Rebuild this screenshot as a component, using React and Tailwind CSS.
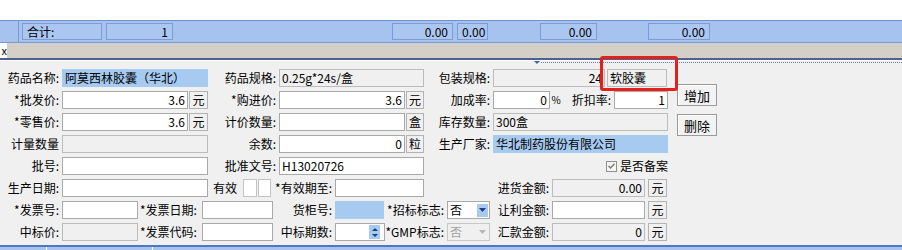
import React from 'react'

function Label({ w, left, children }) {
  return (
    <div className={`${w} shrink-0 whitespace-nowrap ${left ? 'text-left pl-[2px]' : 'text-right pr-[3px]'}`}>{children}</div>
  )
}

function Field({ w, tone = 'white', right, children }) {
  const toneCls =
    tone === 'blue'
      ? 'bg-[#a6caf0] border-[#a6caf0]'
      : tone === 'gray'
      ? 'bg-[#f0f0f0] border-[#bcbcbc]'
      : 'bg-white border-[#a9a9a9]'
  return (
    <div className={`${w} ${toneCls} shrink-0 h-[18px] border flex items-center px-[2px] whitespace-nowrap overflow-hidden ${right ? 'justify-end' : 'justify-start'}`}>
      {children}
    </div>
  )
}

function Unit({ w = 'w-[19px]', ml = 'ml-[1px]', children }) {
  return (
    <div className={`${w} ${ml} shrink-0 h-[18px] border border-[#b3b3b3] bg-[#f0f0f0] flex items-center justify-center`}>{children}</div>
  )
}

function Row({ children }) {
  return <div className="h-[22px] flex items-center">{children}</div>
}

function Select({ disabled }) {
  return (
    <div className={`w-[43px] shrink-0 h-[18px] border flex items-center justify-between pl-[2px] pr-[1px] ${disabled ? 'bg-[#f0f0f0] border-[#c8c8c8] text-[#a0a0a0]' : 'bg-white border-[#a9a9a9]'}`}>
      <span>否</span>
      <div className={`w-[11px] h-[13px] flex items-center justify-center ${disabled ? '' : 'bg-[#a6caf0]'}`}>
        <svg width="7" height="4" viewBox="0 0 7 4"><path d="M0 0h7L3.5 4z" fill={disabled ? '#b5b5b5' : '#1d3f86'} /></svg>
      </div>
    </div>
  )
}

function TopCell({ w, ml, right, children }) {
  return (
    <div className={`${w} ${ml} shrink-0 h-[17px] border border-[#7e9bd6] bg-[#abc7f1] flex items-center px-[4px] ${right ? 'justify-end' : 'justify-start'}`}>
      {children}
    </div>
  )
}

function Btn({ mt, children }) {
  return (
    <div className={`${mt} w-[40px] h-[22px] border border-[#9a9a9a] bg-[#f3f3f3] shadow-[inset_1px_1px_0_#ffffff] flex items-center justify-center text-[13px]`}>{children}</div>
  )
}

export default function App() {
  return (
    <div className="relative w-[902px] h-[250px] overflow-hidden bg-[#f0f0f0] text-[12px] leading-none text-black font-['Noto_Sans_CJK_SC',sans-serif]">
      <div className="h-[20px] bg-white" />
      <div className="h-[23px] bg-[#a6c3ef] border-t border-b border-t-[#6f8fd0] border-b-[#7b98d3] flex items-center">
        <div className="w-[19px] h-full border-r border-[#7b98d3] shrink-0" />
        <TopCell w="w-[80px]" ml="ml-[3px]">合计:</TopCell>
        <TopCell w="w-[67px]" ml="ml-[4px]" right>1</TopCell>
        <TopCell w="w-[61px]" ml="ml-[219px]" right>0.00</TopCell>
        <TopCell w="w-[31px]" ml="ml-[4px]">0.00</TopCell>
        <TopCell w="w-[57px]" ml="ml-[52px]" right>0.00</TopCell>
        <TopCell w="w-[62px]" ml="ml-[51px]" right>0.00</TopCell>
      </div>
      <div className="h-[15px] bg-[#d4d0c8] flex">
        <div className="w-[7px] bg-white overflow-hidden text-[11px] leading-[15px] flex justify-end">x</div>
      </div>
      <div className="h-[2px] bg-[#4d6191]" />
      <div className="h-[7px] flex flex-col">
        <div className="h-[1px] bg-white" />
        <div className="h-[3px] flex items-center">
          <div className="ml-[533px] w-[8px] h-[3px] flex items-start justify-center">
            <svg width="6" height="3" viewBox="0 0 6 3"><path d="M0 0h6L3 3z" fill="#3b64b5" /></svg>
          </div>
          <div className="flex-1 border-t border-dotted border-[#6a7fb0]" />
        </div>
      </div>

      <div className="flex">
        <div className="w-[668px] shrink-0">
          <Row>
            <Label w="w-[62px]">药品名称:</Label>
            <Field w="w-[146px]" tone="blue">阿莫西林胶囊（华北）</Field>
            <Label w="w-[71px]">药品规格:</Label>
            <Field w="w-[145px]" tone="gray">0.25g*24s/盒</Field>
            <Label w="w-[69px]">包装规格:</Label>
            <Field w="w-[112px]" tone="gray" right>24</Field>
            <div className="ml-[2px]"><Field w="w-[60px]" tone="gray">软胶囊</Field></div>
          </Row>
          <Row>
            <Label w="w-[62px]">*批发价:</Label>
            <Field w="w-[126px]" right>3.6</Field>
            <Unit>元</Unit>
            <Label w="w-[71px]">*购进价:</Label>
            <Field w="w-[126px]" right>3.6</Field>
            <Unit w="w-[18px]">元</Unit>
            <Label w="w-[69px]">加成率:</Label>
            <Field w="w-[57px]" right>0</Field>
            <div className="w-[12px] text-center shrink-0 text-[10px]">%</div>
            <Label w="w-[52px]">折扣率:</Label>
            <Field w="w-[54px]" right>1</Field>
          </Row>
          <Row>
            <Label w="w-[62px]">*零售价:</Label>
            <Field w="w-[126px]" right>3.6</Field>
            <Unit>元</Unit>
            <Label w="w-[71px]">计价数量:</Label>
            <Field w="w-[126px]" />
            <Unit w="w-[18px]">盒</Unit>
            <Label w="w-[69px]">库存数量:</Label>
            <Field w="w-[175px]" tone="gray">300盒</Field>
          </Row>
          <Row>
            <Label w="w-[62px]">计量数量</Label>
            <Field w="w-[146px]" tone="gray" />
            <Label w="w-[71px]">余数:</Label>
            <Field w="w-[126px]" right>0</Field>
            <Unit w="w-[18px]">粒</Unit>
            <Label w="w-[69px]">生产厂家:</Label>
            <Field w="w-[175px]" tone="blue">华北制药股份有限公司</Field>
          </Row>
          <Row>
            <Label w="w-[62px]">批号:</Label>
            <Field w="w-[146px]" />
            <Label w="w-[71px]">批准文号:</Label>
            <Field w="w-[145px]">H13020726</Field>
            <div className="w-[182px] shrink-0" />
            <div className="w-[11px] h-[11px] border border-[#8f8f8f] bg-[#f4f4f4] flex items-center justify-center shrink-0">
              <svg width="7" height="6" viewBox="0 0 7 6"><path d="M0.5 3l2 2L6.5 0.8" stroke="#7a7a7a" strokeWidth="1.4" fill="none" /></svg>
            </div>
            <div className="ml-[3px] whitespace-nowrap shrink-0">是否备案</div>
          </Row>
          <Row>
            <Label w="w-[62px]">生产日期:</Label>
            <Field w="w-[146px]" />
            <div className="w-[35px] shrink-0 text-right pr-[6px]">有效</div>
            <div className="w-[14px] h-[18px] bg-white border border-[#c4c4c4] shrink-0" />
            <div className="ml-[1px] w-[13px] h-[18px] bg-white border border-[#c4c4c4] shrink-0" />
            <Label w="w-[64px]">*有效期至:</Label>
            <Field w="w-[89px]" />
            <Label w="w-[128px]">进货金额:</Label>
            <Field w="w-[93px]" tone="gray" right>0.00</Field>
            <Unit ml="ml-[3px]">元</Unit>
          </Row>
          <Row>
            <Label w="w-[62px]">*发票号:</Label>
            <Field w="w-[76px]" />
            <Label w="w-[64px]" left>*发票日期:</Label>
            <Field w="w-[71px]" />
            <Label w="w-[62px]">货柜号:</Label>
            <Field w="w-[49px]" tone="blue" />
            <Label w="w-[63px]">*招标标志:</Label>
            <Select />
            <Label w="w-[62px]">让利金额:</Label>
            <Field w="w-[93px]" />
            <Unit ml="ml-[3px]">元</Unit>
          </Row>
          <Row>
            <Label w="w-[62px]">中标价:</Label>
            <Field w="w-[76px]" tone="gray" />
            <Label w="w-[64px]" left>*发票代码:</Label>
            <Field w="w-[71px]" />
            <Label w="w-[62px]">中标期数:</Label>
            <div className="w-[50px] h-[18px] bg-white border border-[#a9a9a9] shrink-0 flex justify-end items-center pr-[4px]">
              <div className="w-[11px] h-[14px] bg-[#a6caf0] flex flex-col items-center justify-around py-[1px]">
                <svg width="6" height="3" viewBox="0 0 6 3"><path d="M0 3h6L3 0z" fill="#1d3f86" /></svg>
                <svg width="6" height="3" viewBox="0 0 6 3"><path d="M0 0h6L3 3z" fill="#1d3f86" /></svg>
              </div>
            </div>
            <Label w="w-[62px]">*GMP标志:</Label>
            <Select disabled />
            <Label w="w-[62px]">汇款金额:</Label>
            <Field w="w-[93px]" tone="gray" right>0</Field>
            <Unit ml="ml-[3px]">元</Unit>
          </Row>
        </div>
        <div className="ml-[9px] flex flex-col">
          <Btn mt="mt-[17px]">增加</Btn>
          <Btn mt="mt-[8px]">删除</Btn>
        </div>
      </div>

      <div className="mt-[2px] h-[5px] bg-[#a6c3ef] border-t-2 border-[#4f77c4] flex">
        <div className="w-[47px] border-r border-white" />
        <div className="w-[106px] border-r border-white" />
      </div>

      <div className="absolute left-[600px] top-[56px] w-[78px] h-[35px] border-[3px] border-[#e5201c] rounded-[3px]" />
    </div>
  )
}
